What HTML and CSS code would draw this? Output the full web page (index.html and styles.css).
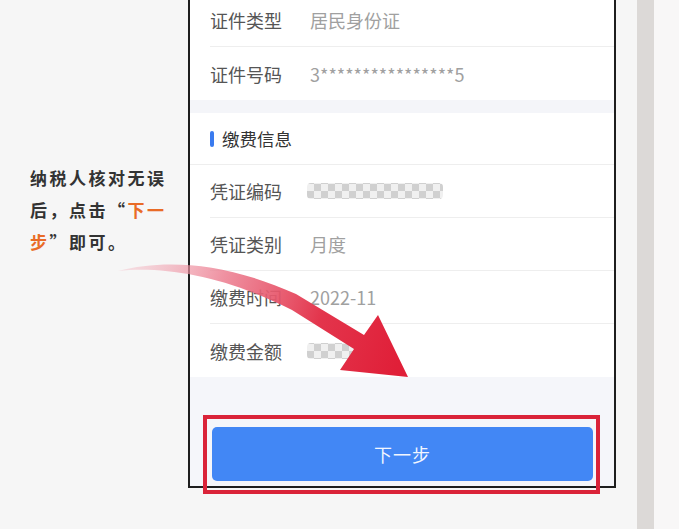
FILE: index.html
```html
<!DOCTYPE html>
<html lang="zh-CN">
<head>
<meta charset="utf-8">
<link rel="stylesheet" href="styles.css">
</head>
<body>
<div class="page">
  <div class="note">
    <p class="note-text">纳税人核对无误<br>后，点击“<span class="hl">下一</span><br><span class="hl">步</span>”即可。</p>
  </div>
  <div class="phone">
    <div class="row"><span class="label">证件类型</span><span class="value">居民身份证</span></div>
    <div class="row last"><span class="label">证件号码</span><span class="value">3****************5</span></div>
    <div class="band"></div>
    <div class="section"><span class="bar"></span><span class="section-title">缴费信息</span></div>
    <div class="row"><span class="label">凭证编码</span><span class="mask mask-long"></span></div>
    <div class="row"><span class="label">凭证类别</span><span class="value">月度</span></div>
    <div class="row"><span class="label">缴费时间</span><span class="value">2022-11</span></div>
    <div class="row last"><span class="label">缴费金额</span><span class="mask mask-short"></span></div>
    <div class="footer">
      <button class="next-btn">下一步</button>
    </div>
  </div>
  <div class="gap"></div>
  <div class="strip"></div>
  <div class="rest"></div>

  <div class="highlight-box"></div>
  <svg class="arrow" width="679" height="529" viewBox="0 0 679 529">
    <defs>
      <linearGradient id="ag" x1="118" y1="270" x2="400" y2="360" gradientUnits="userSpaceOnUse">
        <stop offset="0" stop-color="#f3b7c2" stop-opacity="0.35"/>
        <stop offset="0.35" stop-color="#ec7d90" stop-opacity="0.85"/>
        <stop offset="0.7" stop-color="#e3354c"/>
        <stop offset="1" stop-color="#e01f38"/>
      </linearGradient>
    </defs>
    <path fill="url(#ag)" d="M118,271 C165,259 225,262 296,294 L364,335 L378,315 L408,377 L340,370 L354,349 L292,310 C225,276 165,266 118,271 Z"/>
  </svg>
</div>
</body>
</html>
```
FILE: styles.css
```css
* { box-sizing: border-box; }
html, body {
  margin: 0;
  padding: 0;
}
body {
  width: 679px;
  height: 529px;
  overflow: hidden;
  background: #f6f6f6;
  font-family: "Noto Sans CJK SC", "Noto Sans", sans-serif;
}
.page {
  position: relative;
  display: flex;
  align-items: flex-start;
  width: 679px;
  height: 529px;
}
.note {
  width: 188px;
  flex: none;
  padding: 162px 0 0 30px;
}
.note-text {
  margin: 0;
  font-size: 17px;
  font-weight: 700;
  letter-spacing: 2.5px;
  line-height: 32px;
  color: #333333;
}
.hl { color: #e96b26; }

.phone {
  flex: none;
  width: 428px;
  height: 494px;
  margin-top: -6px;
  background: #ffffff;
  border: 2px solid #1e1e1e;
  border-top: none;
  display: flex;
  flex-direction: column;
}
.row {
  flex: none;
  height: 53px;
  margin-left: 20px;
  border-bottom: 1px solid #eeeeee;
  display: flex;
  align-items: center;
  font-size: 18px;
}
.row.last { border-bottom: none; }
.label {
  width: 100px;
  flex: none;
  color: #555555;
}
.value {
  color: #a0a0a0;
}
.band {
  flex: none;
  height: 13px;
  background: #f4f5f9;
}
.section {
  flex: none;
  height: 52px;
  border-bottom: 1px solid #eeeeee;
  display: flex;
  align-items: center;
  padding-left: 20px;
}
.bar {
  width: 4px;
  height: 16px;
  border-radius: 2px;
  background: #3a7bef;
  margin-right: 8px;
}
.section-title {
  font-size: 17.5px;
  color: #333333;
}
.mask {
  height: 16px;
  margin-left: -3px;
  background: repeating-conic-gradient(#cbcbcb 0 25%, #efefef 0 50%) 0 1px / 14px 14px;
  filter: blur(0.7px);
  border-radius: 4px;
  opacity: 0.9;
}
.mask-long { width: 136px; }
.mask-short { width: 62px; }

.footer {
  flex: 1;
  background: #f5f6fa;
  padding: 50px 21px 0 22px;
}
.next-btn {
  display: block;
  width: 100%;
  height: 54px;
  border: none;
  border-radius: 5px;
  background: #4287f5;
  color: #f2f6ff;
  font-family: "Noto Sans CJK SC", "Noto Sans", sans-serif;
  font-size: 18px;
  letter-spacing: 1px;
}
.gap {
  flex: none;
  width: 21px;
  height: 100%;
}
.strip {
  flex: none;
  width: 17px;
  height: 100%;
  background: #dcd9d7;
}
.rest {
  flex: 1;
  height: 100%;
  background: #f8f7f7;
}
.highlight-box {
  position: absolute;
  left: 203px;
  top: 415px;
  width: 397px;
  height: 79px;
  border: 4px solid #da2339;
}
.arrow {
  position: absolute;
  left: 0;
  top: 0;
  pointer-events: none;
}
```
